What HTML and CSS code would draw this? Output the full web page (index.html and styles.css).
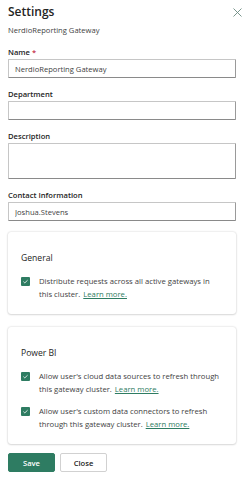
FILE: index.html
```
<!DOCTYPE html>
<html lang="en">
<head>
    <meta charset="UTF-8" />
    <title>Gateway Settings</title>
    <link rel="stylesheet" href="styles.css">
</head>
<body>
    <div class="panel">
        <div class="header">
            <h1>Settings</h1>
            <button class="close-x" aria-label="Close">
                <svg width="9" height="9" viewBox="0 0 9 9"><path d="M0.5 0.5 L8.5 8.5 M8.5 0.5 L0.5 8.5" stroke="#6b8a80" stroke-width="0.9" fill="none"/></svg>
            </button>
        </div>
        <div class="subtitle">NerdioReporting Gateway</div>

        <div class="field first">
            <label>Name <span class="req">*</span></label>
            <input type="text" value="NerdioReporting Gateway">
        </div>
        <div class="field">
            <label>Department</label>
            <input type="text" value="">
        </div>
        <div class="field">
            <label>Description</label>
            <textarea></textarea>
        </div>
        <div class="field">
            <label>Contact Information</label>
            <input type="text" value="Joshua.Stevens">
        </div>

        <div class="card">
            <h2>General</h2>
            <div class="check-row">
                <span class="box"><svg width="9" height="9" viewBox="0 0 9 9"><path d="M2.4 4.6 L3.8 5.9 L6.6 3.2" stroke="#fff" stroke-width="0.8" fill="none"/></svg></span>
                <p>Distribute requests across all active gateways in this cluster. <a href="#">Learn more.</a></p>
            </div>
        </div>

        <div class="card">
            <h2>Power BI</h2>
            <div class="check-row">
                <span class="box"><svg width="9" height="9" viewBox="0 0 9 9"><path d="M2.4 4.6 L3.8 5.9 L6.6 3.2" stroke="#fff" stroke-width="0.8" fill="none"/></svg></span>
                <p>Allow user's cloud data sources to refresh through this gateway cluster. <a href="#">Learn more.</a></p>
            </div>
            <div class="check-row">
                <span class="box"><svg width="9" height="9" viewBox="0 0 9 9"><path d="M2.4 4.6 L3.8 5.9 L6.6 3.2" stroke="#fff" stroke-width="0.8" fill="none"/></svg></span>
                <p>Allow user's custom data connectors to refresh through this gateway cluster. <a href="#">Learn more.</a></p>
            </div>
        </div>

        <div class="actions">
            <button class="btn primary">Save</button>
            <button class="btn">Close</button>
        </div>
    </div>
</body>
</html>
```

FILE: styles.css
```
body {
    margin: 0;
    padding: 0;
    background: #ffffff;
    color: #242424;
    font-family: "Open Sans", "Noto Sans", Arial, sans-serif;
    font-size: 7.6px;
}

.panel {
    padding: 4px 12px 8px 8px;
}

.header {
    display: flex;
    justify-content: space-between;
    align-items: center;
    height: 16px;
}

h1 {
    margin: 0;
    font-size: 12px;
    font-weight: 600;
    line-height: 16px;
}

.close-x {
    border: none;
    background: none;
    padding: 0;
    margin-right: -6px;
    display: flex;
}

.subtitle {
    margin-top: 5px;
    line-height: 10px;
    color: #424242;
}

.field {
    display: flex;
    flex-direction: column;
    margin-top: 11px;
}

.field.first {
    margin-top: 12px;
}

.field label {
    line-height: 10px;
    margin-bottom: 2px;
    font-weight: 600;
}

.req {
    color: #c4314b;
}

.field input,
.field textarea {
    box-sizing: border-box;
    width: 228px;
    height: 19px;
    margin: 0;
    padding: 0 6px;
    border: 1px solid #c6c6c6;
    border-bottom-color: #8a8a8a;
    border-right-color: #9a9a9a;
    border-radius: 1px;
    font-family: inherit;
    font-size: 7.6px;
    color: #424242;
}

.field textarea {
    height: 36px;
    resize: none;
}

.card {
    margin-top: 11px;
    width: 228px;
    box-sizing: border-box;
    padding: 20px 12px 13px 13px;
    border-radius: 3px;
    box-shadow: 0 0 2px rgba(0, 0, 0, 0.22), 0 1px 2px rgba(0, 0, 0, 0.1);
}

.card + .card {
    margin-top: 13px;
}

h2 {
    margin: 0 0 11px;
    font-size: 8.6px;
    font-weight: 400;
    line-height: 12px;
}

.check-row {
    display: flex;
    align-items: flex-start;
    gap: 9px;
}

.check-row + .check-row {
    margin-top: 9px;
}

.box {
    flex: none;
    width: 9px;
    height: 9px;
    margin-top: 2px;
    background: #2e7c62;
    border-radius: 1px;
    display: flex;
}

.check-row p {
    margin: 0;
    font-size: 7.7px;
    line-height: 13px;
    color: #424242;
}

.check-row a {
    color: #2e7c62;
    text-decoration: underline;
    margin-left: 1px;
}

.actions {
    display: flex;
    gap: 5px;
    margin-top: 9px;
}

.btn {
    box-sizing: border-box;
    width: 47px;
    height: 19px;
    border: 1px solid #d1d1d1;
    border-radius: 2px;
    background: #ffffff;
    font-family: inherit;
    font-size: 7.6px;
    font-weight: 600;
    color: #242424;
}

.btn.primary {
    background: #2e7c62;
    border-color: #2e7c62;
    color: #ffffff;
}
```
